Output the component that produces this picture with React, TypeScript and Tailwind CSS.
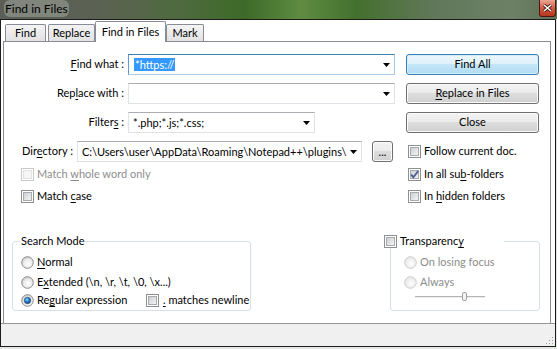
import React from 'react';

type P = { children?: React.ReactNode; className?: string };

const U: React.FC<P> = ({ children }) => (
  <span className="underline decoration-1 underline-offset-[2px]">{children}</span>
);

const Arrow = () => (
  <svg width="7" height="4" viewBox="0 0 7 4" className="shrink-0">
    <polygon points="0,0 7,0 3.5,4" fill="#000" />
  </svg>
);

const Combo: React.FC<P & { focused?: boolean }> = ({ children, className, focused }) => (
  <div
    className={`flex h-[21px] items-center border bg-white pl-[4px] pr-[4px] ${
      focused ? 'border-[#a9cbe6] border-t-[#3c7fb1] border-l-[#5b9dd0]' : 'border-[#dfe3e8] border-t-[#abadb3]'
    } ${className ?? ''}`}
  >
    <div className="min-w-0 flex-1 overflow-hidden whitespace-nowrap leading-[14px]">{children}</div>
    <Arrow />
  </div>
);

const Btn: React.FC<P & { primary?: boolean }> = ({ children, className, primary }) => (
  <div
    className={`flex h-[21px] items-center justify-center rounded-[3px] border ${
      primary
        ? 'border-[#3c7fb1] bg-[linear-gradient(#edf7fd_0%,#def1fb_48%,#c4e6f8_50%,#b0dcf3_100%)] shadow-[inset_0_0_0_1px_#d2eefc]'
        : 'border-[#707070] bg-[linear-gradient(#f3f3f3_0%,#ebebeb_48%,#dddddd_50%,#d0d0d0_100%)] shadow-[inset_0_0_0_1px_#fbfbfb]'
    } ${className ?? ''}`}
  >
    {children}
  </div>
);

const Check: React.FC<{ checked?: boolean; disabled?: boolean }> = ({ checked, disabled }) => (
  <svg width="13" height="13" viewBox="0 0 13 13" className="shrink-0">
    <rect x="0.5" y="0.5" width="12" height="12" fill="#fff" stroke={disabled ? '#c9c9c9' : '#8e8f8f'} />
    <rect
      x="2.5"
      y="2.5"
      width="8"
      height="8"
      fill={disabled ? '#f6f6f6' : 'url(#cbg)'}
      stroke={disabled ? '#e3e3e3' : '#a7abb0'}
    />
    {checked && <path d="M3.2 6.6 L5.4 9.2 L10.2 3" fill="none" stroke="#4a5d8e" strokeWidth="1.8" />}
  </svg>
);

const Radio: React.FC<{ on?: boolean; disabled?: boolean }> = ({ on, disabled }) => (
  <svg width="13" height="13" viewBox="0 0 13 13" className="shrink-0">
    <circle cx="6.5" cy="6.5" r="5.8" fill={disabled ? 'url(#rbgd)' : 'url(#rbg)'} stroke={disabled ? '#cdcdcd' : '#8c8e8f'} />
    {on && <circle cx="6.5" cy="6.5" r="3.2" fill="url(#rdot)" stroke="#163f6e" strokeWidth="0.6" />}
  </svg>
);

const Tab: React.FC<P> = ({ children, className }) => (
  <div
    className={`flex h-[17px] items-center justify-center rounded-t-[2px] border border-b-0 border-[#898c95] bg-[linear-gradient(#f4f4f4,#e2e2e2)] ${className ?? ''}`}
  >
    {children}
  </div>
);

export default function App() {
  return (
    <div className="h-[349px] w-[557px] overflow-hidden bg-[#e4e8e2] font-[Lato,sans-serif] text-[11px] text-black">
      <svg width="0" height="0" className="absolute">
        <defs>
          <linearGradient id="cbg" x1="0" y1="0" x2="1" y2="1">
            <stop offset="0" stopColor="#c9ccd1" />
            <stop offset="1" stopColor="#f7f7f7" />
          </linearGradient>
          <radialGradient id="rbg" cx="0.55" cy="0.6" r="0.6">
            <stop offset="0" stopColor="#ffffff" />
            <stop offset="0.6" stopColor="#ececec" />
            <stop offset="1" stopColor="#c8c8c8" />
          </radialGradient>
          <radialGradient id="rbgd" cx="0.55" cy="0.6" r="0.6">
            <stop offset="0" stopColor="#ffffff" />
            <stop offset="1" stopColor="#e6e6e6" />
          </radialGradient>
          <radialGradient id="rdot" cx="0.4" cy="0.35" r="0.7">
            <stop offset="0" stopColor="#8ad2ff" />
            <stop offset="0.5" stopColor="#2b7fc8" />
            <stop offset="1" stopColor="#133f70" />
          </radialGradient>
        </defs>
      </svg>

      {/* title bar */}
      <div className="flex h-[19px] items-start justify-between bg-[linear-gradient(90deg,#5a5e57_0%,#5b6253_18%,#4f6a3f_32%,#3d6a28_44%,#5f8c41_54%,#44702e_64%,#61785a_78%,#6d8166_92%,#5f7159_100%)]">
        <span className="ml-[4px] rounded-[6px] bg-[rgba(200,205,198,0.35)] px-[1px] text-[12px] leading-[17px] text-black">
          Find in Files
        </span>
        <div className="mr-[1px] flex h-[17px] w-[17px] items-center justify-center rounded-b-[3px] border border-t-0 border-[#4a1a12] bg-[linear-gradient(#eba694,#d45c44_50%,#b8341d)]">
          <svg width="9" height="8" viewBox="0 0 9 8">
            <path d="M1 1 L8 7 M8 1 L1 7" stroke="#3b1510" strokeWidth="3.2" />
            <path d="M1 1 L8 7 M8 1 L1 7" stroke="#fff" strokeWidth="1.6" />
          </svg>
        </div>
      </div>

      {/* window body */}
      <div className="flex h-[328px] w-[556px] flex-col border border-[#1c1c1c] bg-white">
        {/* tab header */}
        <div className="flex h-[21px] items-end pl-[4px]">
          <Tab className="w-[41px]">Find</Tab>
          <Tab className="ml-[2px] w-[47px]">Replace</Tab>
          <div className="relative z-10 -mb-px flex h-[21px] w-[71px] items-start justify-center rounded-t-[2px] border border-b-0 border-[#898c95] bg-white pt-[2px]">
            Find in Files
          </div>
          <Tab className="w-[38px]">Mark</Tab>
        </div>

        {/* tab panel */}
        <div className="ml-[2px] flex h-[282px] w-[548px] flex-col border border-b-0 border-[#898c95]">
          <div className="mt-[12px] flex h-[21px] items-center">
            <span className="w-[120px] text-right">
              <U>F</U>ind what :
            </span>
            <Combo focused className="ml-[4px] w-[267px]">
              <span className="ml-[1px] bg-[#3399ff] px-[1px] text-white">*https://</span>
            </Combo>
            <Btn primary className="ml-[11px] w-[133px]">
              Find All
            </Btn>
          </div>

          <div className="mt-[8px] flex h-[21px] items-center">
            <span className="w-[120px] text-right">
              Rep<U>l</U>ace with :
            </span>
            <Combo className="ml-[4px] w-[267px]" />
            <Btn className="ml-[11px] w-[133px]">
              <span>
                <U>R</U>eplace in Files
              </span>
            </Btn>
          </div>

          <div className="mt-[8px] flex h-[21px] items-center">
            <span className="w-[120px] text-right">
              Filter<U>s</U> :
            </span>
            <Combo className="ml-[4px] w-[187px]">*.php;*.js;*.css;</Combo>
            <Btn className="ml-[91px] w-[133px]">Close</Btn>
          </div>

          <div className="mt-[8px] flex h-[21px] items-center">
            <span className="ml-[18px] w-[55px]">
              Dir<U>e</U>ctory :
            </span>
            <Combo className="w-[285px]">C:\Users\user\AppData\Roaming\Notepad++\plugins\</Combo>
            <Btn className="ml-[10px] w-[21px]">
              <span className="leading-[10px]">...</span>
            </Btn>
            <div className="ml-[15px] flex items-center gap-[3px]">
              <Check />
              <span>Follow current doc.</span>
            </div>
          </div>

          <div className="mt-[4px] flex h-[16px] items-center">
            <div className="flex w-[404px] items-center gap-[3px] pl-[17px] text-[#8d8d8d]">
              <Check disabled />
              <span>
                Match <U>w</U>hole word only
              </span>
            </div>
            <div className="flex items-center gap-[3px]">
              <Check checked />
              <span>
                In all su<U>b</U>-folders
              </span>
            </div>
          </div>

          <div className="mt-[6px] flex h-[16px] items-center">
            <div className="flex w-[404px] items-center gap-[3px] pl-[17px]">
              <Check />
              <span>
                Match <U>c</U>ase
              </span>
            </div>
            <div className="flex items-center gap-[3px]">
              <Check />
              <span>
                In <U>h</U>idden folders
              </span>
            </div>
          </div>

          <div className="mt-[30px] flex items-start">
            <fieldset className="ml-[8px] h-[77px] w-[239px] rounded-[3px] border border-[#d5dfe5]">
              <legend className="ml-[7px] px-[1px] leading-[14px]">Search Mode</legend>
              <div className="mt-[5px] flex h-[18px] items-center gap-[3px] pl-[8px]">
                <Radio />
                <span>
                  <U>N</U>ormal
                </span>
              </div>
              <div className="mt-[2px] flex h-[18px] items-center gap-[3px] pl-[8px]">
                <Radio />
                <span>
                  E<U>x</U>tended (\n, \r, \t, \0, \x...)
                </span>
              </div>
              <div className="flex h-[18px] items-center gap-[3px] pl-[8px]">
                <Radio on />
                <span className="w-[106px]">
                  Re<U>g</U>ular expression
                </span>
                <Check />
                <span className="ml-[1px]">
                  <U>.</U> matches newline
                </span>
              </div>
            </fieldset>

            <fieldset className="ml-[139px] h-[77px] w-[150px] rounded-[3px] border border-[#d5dfe5]">
              <legend className="-ml-[7px] leading-[14px]">
                <span className="flex w-[120px] items-center gap-[3px]">
                  <Check />
                  <span>
                    Transparenc<U>y</U>
                  </span>
                </span>
              </legend>
              <div className="mt-[5px] flex h-[18px] items-center gap-[3px] pl-[13px] text-[#8d8d8d]">
                <Radio disabled />
                <span>On losing focus</span>
              </div>
              <div className="mt-[2px] flex h-[18px] items-center gap-[3px] pl-[13px] text-[#8d8d8d]">
                <Radio disabled />
                <span>Always</span>
              </div>
              <svg width="72" height="12" viewBox="0 0 72 12" className="ml-[24px]">
                <line x1="0" y1="5.5" x2="70" y2="5.5" stroke="#b4b4b4" />
                <line x1="0" y1="6.5" x2="70" y2="6.5" stroke="#ececec" />
                <rect x="47.5" y="1.5" width="4" height="8" rx="1.5" fill="#f2f2f2" stroke="#a3a3a3" />
              </svg>
            </fieldset>
          </div>
        </div>

        {/* bottom strip */}
        <div className="flex h-[23px] items-end justify-end border-t border-[#979797] bg-[#f0f0f0]">
          <svg width="10" height="10" viewBox="0 0 10 10" className="mb-[1px] mr-[1px]">
            {[
              [8, 2],
              [8, 5],
              [8, 8],
              [5, 5],
              [5, 8],
              [2, 8],
            ].map(([x, y]) => (
              <rect key={`${x}-${y}`} x={x} y={y} width="1" height="1" fill="#a0a0a0" />
            ))}
          </svg>
        </div>
      </div>
    </div>
  );
}
